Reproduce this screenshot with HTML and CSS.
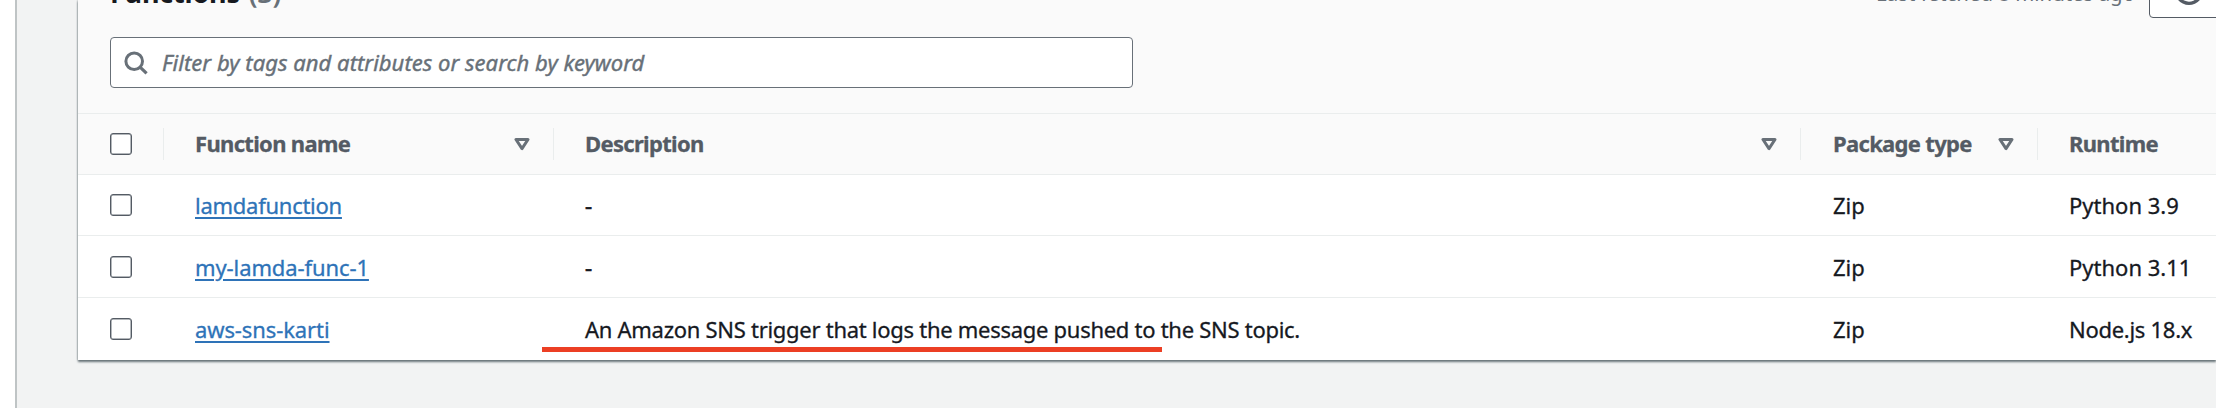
FILE: index.html
```html
<!DOCTYPE html>
<html lang="en">
<head>
<meta charset="utf-8">
<title>Functions</title>
<link rel="stylesheet" href="styles.css">
</head>
<body>
<div class="app">
  <aside class="side"></aside>
  <main class="content">
    <section class="panel">
      <header class="panel-head">
        <div class="title-row">
          <h2 class="title">Functions <span class="count">(3)</span></h2>
          <div class="actions">
            <span class="fetched">Last fetched 8 minutes ago</span>
            <button class="refresh" aria-label="Refresh">
              <svg width="32" height="32" viewBox="0 0 32 32"><path d="M28 19A12.4 12.4 0 1 1 25.5 8" fill="none" stroke="currentColor" stroke-width="3.4"/><path d="M27 1v9H18" fill="none" stroke="currentColor" stroke-width="3.4"/></svg>
            </button>
          </div>
        </div>
        <div class="search">
          <svg class="search-icon" width="24" height="24" viewBox="0 0 24 24"><circle cx="10.2" cy="10.2" r="8.3" fill="none" stroke="currentColor" stroke-width="3"/><path d="M15.8 15.8L22.6 22.3" stroke="currentColor" stroke-width="3.2"/></svg>
          <span class="placeholder">Filter by tags and attributes or search by keyword</span>
        </div>
      </header>
      <div class="row head">
        <div class="cell check"><i class="box"></i></div>
        <div class="cell"><span>Function name</span><svg class="sort" width="16" height="13" viewBox="0 0 16 13"><path d="M2 1.5H14L8 10.6Z"/></svg></div>
        <div class="cell"><span>Description</span><svg class="sort" width="16" height="13" viewBox="0 0 16 13"><path d="M2 1.5H14L8 10.6Z"/></svg></div>
        <div class="cell"><span>Package type</span><svg class="sort" width="16" height="13" viewBox="0 0 16 13"><path d="M2 1.5H14L8 10.6Z"/></svg></div>
        <div class="cell last"><span>Runtime</span></div>
      </div>
      <div class="row first">
        <div class="cell check"><i class="box"></i></div>
        <div class="cell"><a class="link tight">lamdafunction</a></div>
        <div class="cell dash">-</div>
        <div class="cell">Zip</div>
        <div class="cell">Python 3.9</div>
      </div>
      <div class="row">
        <div class="cell check"><i class="box"></i></div>
        <div class="cell"><a class="link">my-lamda-func-1</a></div>
        <div class="cell dash">-</div>
        <div class="cell">Zip</div>
        <div class="cell">Python 3.11</div>
      </div>
      <div class="row">
        <div class="cell check"><i class="box"></i></div>
        <div class="cell"><a class="link">aws-sns-karti</a></div>
        <div class="cell marked tight">An Amazon SNS trigger that logs the message pushed to the SNS topic.</div>
        <div class="cell">Zip</div>
        <div class="cell tight">Node.js 18.x</div>
      </div>
    </section>
  </main>
</div>
</body>
</html>
```
FILE: styles.css
```css
* { box-sizing: border-box; }
body {
  margin: 0;
  height: 408px;
  overflow: hidden;
  background: #f2f3f3;
  color: #16191f;
  font: 22px/30px "Noto Sans", sans-serif;
}
.app { display: flex; height: 408px; }
.side { width: 17px; background: #fff; border-right: 2px solid #bfc4c5; flex: none; }
.content { flex: 1; min-width: 0; padding-left: 61px; }
.panel {
  height: 360px;
  background: #fff;
  box-shadow: 0 2px 2px #6b767b, 0 0 2px #8a9396;
}
.panel-head { height: 113px; background: #fafafa; padding-left: 32px; }
.title-row { display: flex; justify-content: space-between; height: 37px; }
.title { margin: -24px 0 0; font-size: 27px; line-height: 34px; height: 34px; font-weight: 700; white-space: nowrap; letter-spacing: -0.2px; }
.count { margin-left: 2px; color: #687078; font-weight: 600; }
.actions { display: flex; }
.fetched { margin-top: -22px; height: 30px; font-size: 20.4px; color: #687078; white-space: nowrap; }
.refresh {
  display: flex;
  justify-content: center;
  margin: -46px -13px 0 14px;
  width: 80px;
  height: 64px;
  padding: 20px 0 0;
  background: #fff;
  border: 1px solid #545b64;
  border-radius: 4px;
  color: #545b64;
}
.refresh svg { flex: none; }
.search {
  width: 1023px;
  height: 51px;
  display: flex;
  align-items: center;
  padding-left: 13px;
  background: #fff;
  border: 1px solid #687078;
  border-radius: 4px;
  color: #687078;
}
.search-icon { flex: none; margin-right: 14px; }
.placeholder { font-style: italic; white-space: nowrap; letter-spacing: 0.04px; margin-top: -2px; -webkit-text-stroke: 0.4px; }
.row {
  display: grid;
  grid-template-columns: 86px 390px 1247px 237px 1fr;
  height: 62px;
  border-top: 1px solid #eaeded;
  -webkit-text-stroke: 0.3px;
}
.head { height: 61px; background: #fafafa; color: #545b64; font-weight: 700; letter-spacing: -0.68px; }
.head span { margin-top: -2px; }
.first { height: 61px; }
.cell {
  position: relative;
  display: flex;
  align-items: center;
  justify-content: space-between;
  padding-left: 31px;
  white-space: nowrap;
}
.cell:nth-child(4) { padding-left: 32px; }
.check { padding-left: 32px; }
.tight { letter-spacing: -0.28px; }
.dash { -webkit-text-stroke: 0.7px; }
.head .cell:not(.last)::after {
  content: "";
  position: absolute;
  right: 0;
  top: 14px;
  width: 1px;
  height: 32px;
  background: #eaeded;
}
.sort { margin-right: 24px; fill: none; stroke: #687078; stroke-width: 3; stroke-linejoin: round; }
.box { width: 22px; height: 22px; border: 1px solid #545b64; box-shadow: inset 0 0 0 0.5px #687078; border-radius: 3px; background: #fff; }
.link { color: #2e73b8; letter-spacing: -0.1px; text-decoration: underline; text-decoration-thickness: 2px; text-underline-offset: 3px; }
.link.tight { letter-spacing: -0.26px; }
.marked::before {
  content: "";
  position: absolute;
  left: -12px;
  top: 49px;
  width: 620px;
  height: 5px;
  background: #ec3f24;
}
```
